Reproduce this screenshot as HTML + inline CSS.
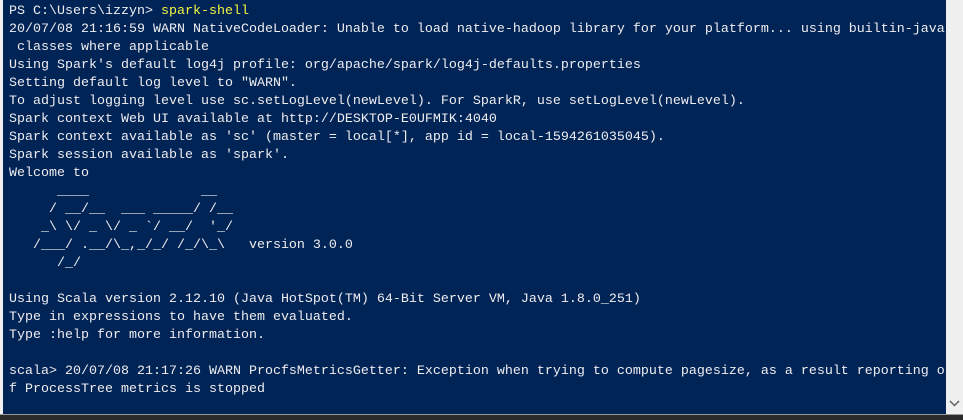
<!DOCTYPE html>
<html><head><style>
html,body{margin:0;padding:0;}
body{width:963px;height:419px;overflow:hidden;background:#f0f0f0;position:relative;}
#term{position:absolute;left:3px;top:0;width:943px;height:414px;background:#012456;}
pre{position:absolute;left:6px;top:3px;margin:0;font-family:"Liberation Mono",monospace;font-size:13.33px;line-height:18px;color:#eeedf0;white-space:pre;}
.y{color:#f5f543;}
#sb{position:absolute;left:946px;top:0;width:17px;height:414px;background:#f0f0f0;}
#bot{position:absolute;left:0;top:414px;width:963px;height:5px;background:#2b2b2b;border-top:1px solid #999;}
</style></head><body>
<div id="term"><pre>PS C:\Users\izzyn&gt; <span class="y">spark-shell</span>
20/07/08 21:16:59 WARN NativeCodeLoader: Unable to load native-hadoop library for your platform... using builtin-java
 classes where applicable
Using Spark's default log4j profile: org/apache/spark/log4j-defaults.properties
Setting default log level to "WARN".
To adjust logging level use sc.setLogLevel(newLevel). For SparkR, use setLogLevel(newLevel).
Spark context Web UI available at http://DESKTOP-E0UFMIK:4040
Spark context available as 'sc' (master = local[*], app id = local-1594261035045).
Spark session available as 'spark'.
Welcome to
      ____              __
     / __/__  ___ _____/ /__
    _\ \/ _ \/ _ `/ __/  '_/
   /___/ .__/\_,_/_/ /_/\_\   version 3.0.0
      /_/

Using Scala version 2.12.10 (Java HotSpot(TM) 64-Bit Server VM, Java 1.8.0_251)
Type in expressions to have them evaluated.
Type :help for more information.

scala&gt; 20/07/08 21:17:26 WARN ProcfsMetricsGetter: Exception when trying to compute pagesize, as a result reporting o
f ProcessTree metrics is stopped</pre></div>
<div id="sb"><svg width="17" height="414" style="position:absolute;left:0;top:0"><path d="M4 401 L8.5 405.5 L13 401" stroke="#606060" stroke-width="1.5" fill="none"/></svg></div>
<div id="bot"></div>
</body></html>
